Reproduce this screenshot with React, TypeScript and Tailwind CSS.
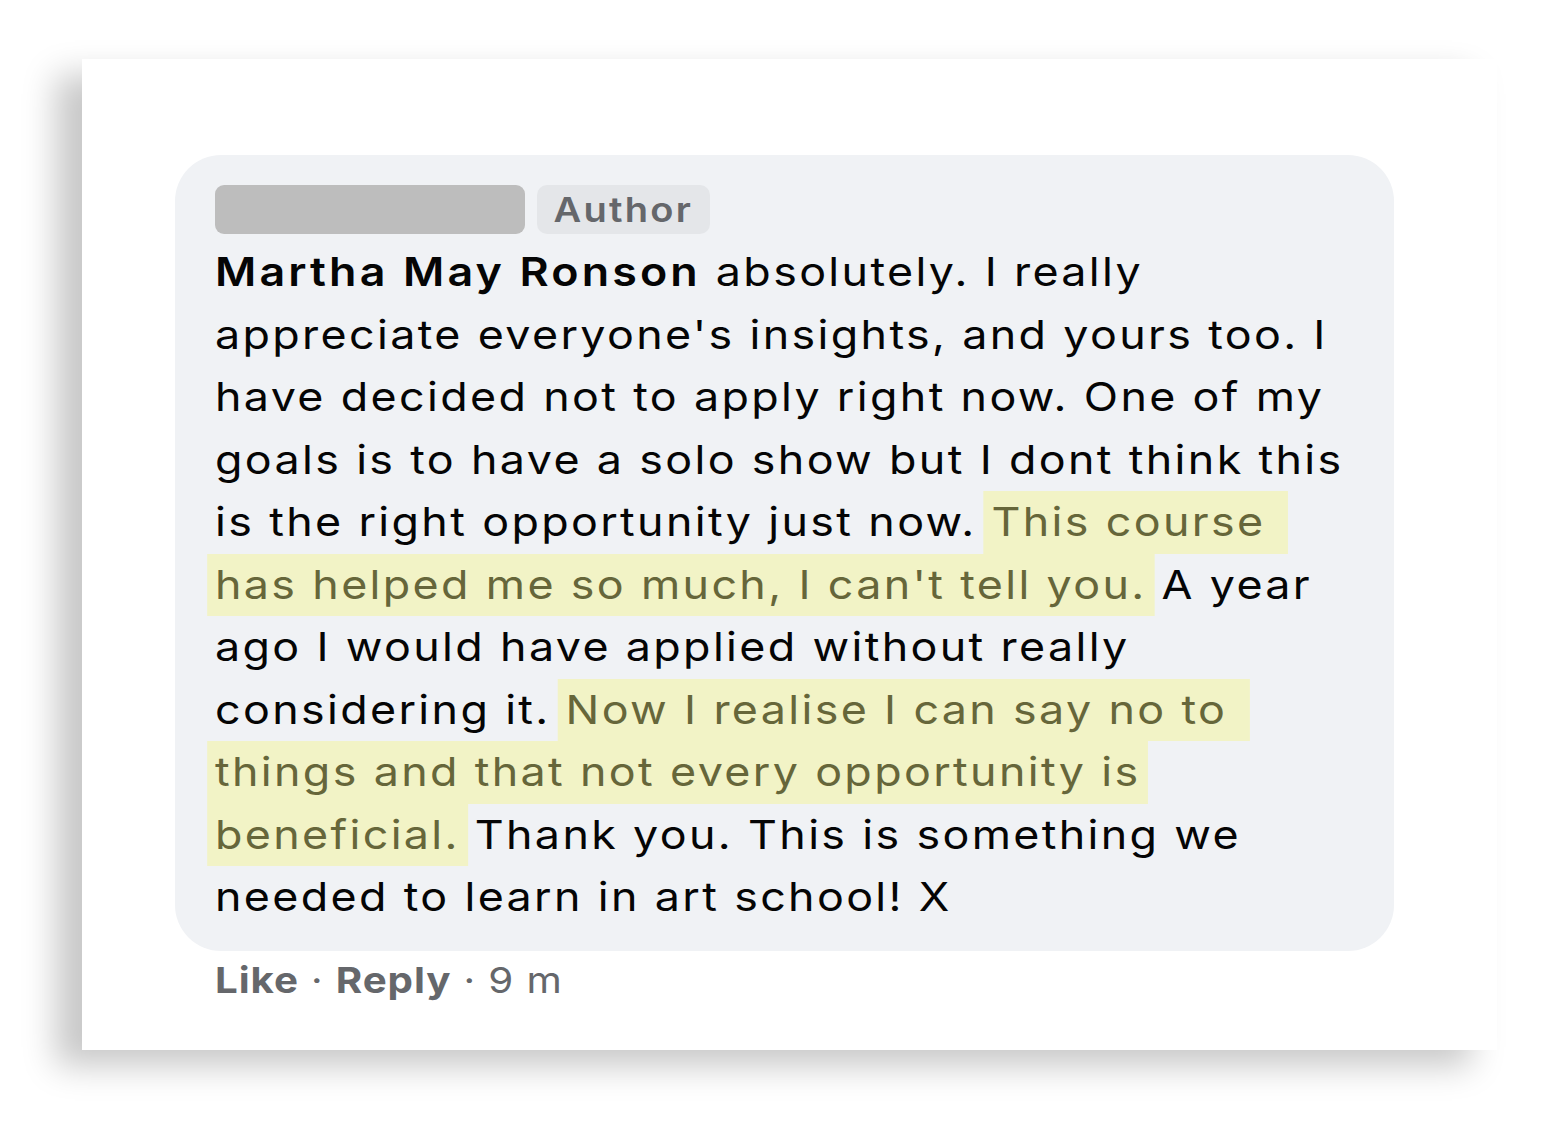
import React from "react";

type Seg = { t: string; b?: boolean; h?: boolean };

const lines: Seg[][] = [
  [{ t: "Martha May Ronson", b: true }, { t: " absolutely. I really" }],
  [{ t: "appreciate everyone's insights, and yours too. I" }],
  [{ t: "have decided not to apply right now. One of my" }],
  [{ t: "goals is to have a solo show but I dont think this" }],
  [{ t: "is the right opportunity just now. " }, { t: "This course ", h: true }],
  [{ t: "has helped me so much, I can't tell you.", h: true }, { t: " A year" }],
  [{ t: "ago I would have applied without really" }],
  [{ t: "considering it. " }, { t: "Now I realise I can say no to ", h: true }],
  [{ t: "things and that not every opportunity is", h: true }],
  [{ t: "beneficial.", h: true }, { t: " Thank you. This is something we" }],
  [{ t: "needed to learn in art school! X" }],
];

export default function App() {
  return (
    <div
      className="min-h-screen w-full bg-white pt-[59px] pl-[82px]"
      style={{ fontFamily: "Inter, 'Noto Sans', sans-serif" }}
    >
      <div className="w-[1415px] h-[991px] bg-white shadow-[-26px_16px_32px_rgba(0,0,0,0.22)] pt-[96px] pl-[93px]">
        <div className="w-[1219px] rounded-[46px] bg-[#f0f2f5] pl-[40px] pt-[30px] pb-[22px]">
          <div className="flex items-center gap-[12px] h-[49px]">
            <div className="w-[310px] h-[49px] rounded-[9px] bg-[#bdbdbd]" />
            <div className="h-[49px] w-[173px] rounded-[10px] bg-[#e4e6e9] flex items-center justify-center">
              <span className="inline-block scale-x-[1.12] text-[34px] font-semibold text-[#65676b] tracking-[2px]">
                Author
              </span>
            </div>
          </div>
          <div className="mt-[7px] text-[40px] tracking-[2.1px] text-[#050505] whitespace-nowrap scale-x-[1.12] origin-left">
            {lines.map((line, i) => (
              <div key={i} className="h-[62.5px] leading-[62.5px]">
                {line.map((s, j) =>
                  s.h ? (
                    <span
                      key={j}
                      className="inline-block h-[62.5px] bg-[#f2f3c6] text-[#66663a] px-[7px] -mx-[7px] whitespace-pre"
                    >
                      {s.t}
                    </span>
                  ) : (
                    <span
                      key={j}
                      className={s.b ? "font-semibold tracking-[2.8px] whitespace-pre" : "whitespace-pre"}
                    >
                      {s.t}
                    </span>
                  )
                )}
              </div>
            ))}
          </div>
        </div>
        <div className="pl-[40px] mt-[7px] whitespace-nowrap leading-[44px]">
          <div className="inline-block scale-x-[1.12] origin-left text-[36px] tracking-[0.8px] text-[#65676b]">
            <span className="font-bold">Like</span>
            <span> · </span>
            <span className="font-bold">Reply</span>
            <span> · 9 m</span>
          </div>
        </div>
      </div>
    </div>
  );
}
